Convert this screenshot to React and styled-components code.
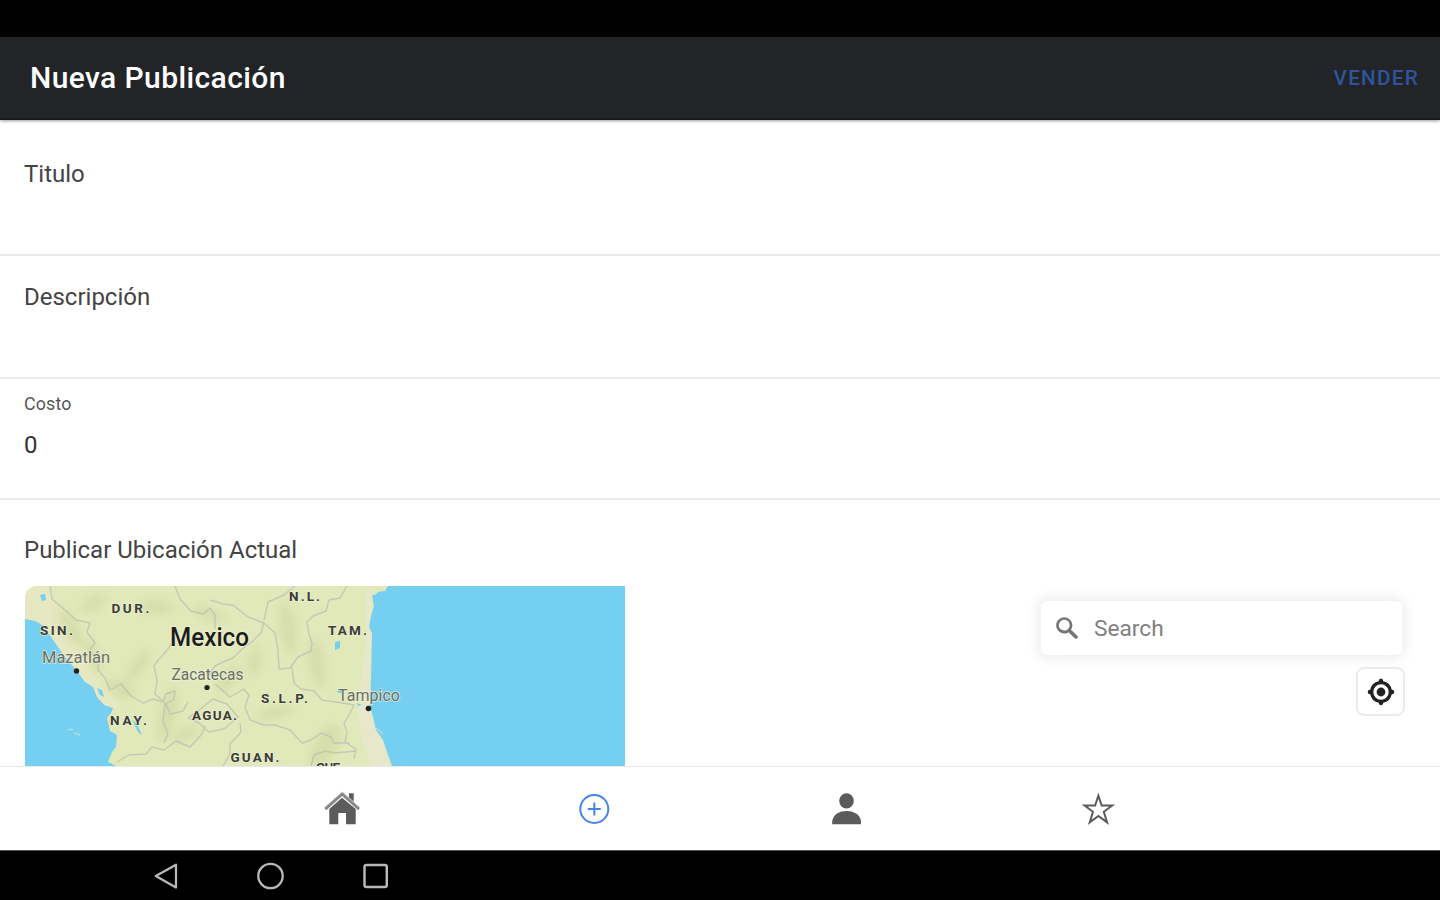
import React from 'react';
import styled, { createGlobalStyle } from 'styled-components';

const GlobalStyle = createGlobalStyle`
  * { box-sizing: border-box; }
  body { margin: 0; background: #000; font-family: Roboto, "Liberation Sans", sans-serif; }
`;

const Screen = styled.div`
  width: 1440px;
  height: 900px;
  display: flex;
  flex-direction: column;
  overflow: hidden;
  background: #fff;
`;

const StatusBar = styled.div`
  flex: 0 0 37px;
  background: #000;
`;

const Header = styled.header`
  flex: 0 0 83px;
  display: flex;
  align-items: center;
  justify-content: space-between;
  padding: 1px 21px 0 30px;
  background: #222428;
  border-bottom: 2px solid #17181b;
  box-shadow: 0 1px 3px rgba(0, 0, 0, 0.4);
  z-index: 1;
`;

const Title = styled.h1`
  margin: 0;
  font-size: 30px;
  line-height: 36px;
  font-weight: 500;
  letter-spacing: 0.4px;
  color: #fff;
`;

const SellButton = styled.button`
  padding: 0;
  border: 0;
  background: none;
  font: 500 20.7px/24px Roboto, sans-serif;
  letter-spacing: 1.25px;
  color: #30549b;
`;

const Content = styled.main`
  flex: 1;
  min-height: 0;
  display: flex;
  flex-direction: column;
  overflow: hidden;
`;

const Field = styled.label`
  flex: 0 0 ${(p) => p.$height}px;
  display: flex;
  flex-direction: column;
  align-items: flex-start;
  padding: ${(p) => p.$top}px 24px 0;
  border-bottom: 2px solid #ebebeb;
`;

const Label = styled.span`
  font-size: ${(p) => (p.$small ? 17.8 : 24)}px;
  line-height: 28px;
  letter-spacing: ${(p) => (p.$small ? 0.2 : 0)}px;
  color: ${(p) => (p.$small ? '#555' : '#444')};
`;

const Value = styled.span`
  margin-top: 13px;
  font-size: 24px;
  line-height: 28px;
  color: #333;
`;

const Location = styled.section`
  flex: 1;
  display: flex;
  flex-direction: column;
  padding: 36px 24px 0;
`;

const MapRow = styled.div`
  display: flex;
  justify-content: space-between;
  margin-top: 22px;
  padding-left: 1px;
`;

const MapCanvas = styled.svg`
  display: block;
  width: 600px;
  height: 180px;
  border-radius: 12px 0 0 0;
`;

const Controls = styled.div`
  display: flex;
  flex-direction: column;
  align-items: flex-end;
  gap: 14px;
  padding: 15px 14px 0 0;
`;

const SearchBox = styled.div`
  display: flex;
  align-items: center;
  gap: 12px;
  width: 361px;
  height: 54px;
  padding-left: 11px;
  border-radius: 6px;
  background: #fff;
  box-shadow: 0 0 13px 3px rgba(0, 0, 0, 0.08);
  color: #808080;
  font-size: 22.7px;
`;

const LocateButton = styled.button`
  display: flex;
  align-items: center;
  justify-content: center;
  width: 45px;
  height: 45px;
  margin-right: -1px;
  padding: 0;
  border: 0;
  border-radius: 6px;
  background: #fff;
  box-shadow: 0 0 0 2px rgba(0, 0, 0, 0.08);
`;

const TabBar = styled.nav`
  flex: 0 0 84px;
  display: flex;
  justify-content: center;
  border-top: 1px solid #e9e9e9;
  background: #fff;
`;

const Tab = styled.div`
  width: 252px;
  display: flex;
  align-items: center;
  justify-content: center;
  color: ${(p) => (p.$active ? '#4584ec' : '#5b5b5b')};
`;

const SystemBar = styled.div`
  flex: 0 0 50px;
  display: flex;
  align-items: center;
  gap: 75px;
  padding-left: 151px;
  border-top: 1px solid #555;
  background: #000;
`;

const stateLines = [
  'M25 0 L27 13 L40 24 L51 34 L65 37 L62 46 L70 57 L64 65 L74 74 L73 84 L80 92 L85 104 L96 98 L106 110 L118 117 L128 113 L138 116 L141 108 L150 105 L149 113 L141 118 L145 128 L158 125 L163 116',
  'M150 0 L155 13 L166 25 L178 28 L185 22 L190 29 L190 43',
  'M150 50 L145 60 L139 68 L134 73 L129 80 L132 94 L130 108 L140 117 L138 135 L143 148 L139 157',
  'M185 14 L198 18 L208 19 L223 31 L239 37 L236 47 L228 55 L217 63 L208 72 L198 76 L190 80 L184 89',
  'M239 34 L243 16 L259 9 L270 0 M239 37 L250 47 L253 64 L254 83 L265 82 L273 71 L286 65 L287 57 L284 48 L282 36 L288 30 L301 25 L304 14 L315 12 L322 0',
  'M267 81 L269 97 L276 103 L289 105 L297 114 L318 117 L329 119 L324 129 L319 137 L322 146 L320 156 L331 163 L329 173',
  'M190 98 L205 111 L219 103 L224 109 L220 121 L225 134 L239 139 L250 139 L265 144 L277 157 L286 154 L296 147 L306 151 L309 157 L325 157',
  'M163 132 L174 124 L188 113 L202 118 L213 131 L199 143 L184 146 L174 137 L163 132',
  'M92 176 L104 169 L121 168 L127 161 L139 164 L151 155 L165 161 L177 148 L180 140',
  'M215 137 L216 146 L205 158 L205 168 L198 180 M286 180 L289 169 L300 165 L310 167 L331 165',
];

const relief = [
  [45, 42, 8, 20, -32], [68, 70, 6, 18, -24], [96, 103, 15, 8, 26],
  [113, 80, 6, 18, 35], [143, 128, 8, 27, 12], [160, 148, 14, 6, -20],
  [185, 28, 17, 5, 20], [230, 75, 7, 14, 8], [263, 42, 8, 27, -8],
  [292, 78, 8, 25, -10], [250, 127, 19, 6, -13], [300, 160, 11, 23, 30],
  [68, 17, 13, 6, -25], [204, 93, 7, 16, 40], [131, 21, 17, 7, 4],
];

const mapLabels = [
  ['DUR.', 86.5, 27, 38, 'state'],
  ['N.L.', 264, 14.5, 31, 'state'],
  ['SIN.', 15, 49, 33, 'state'],
  ['TAM.', 303, 49, 39, 'state'],
  ['NAY.', 85, 139, 37, 'state'],
  ['AGUA.', 167, 133.5, 45, 'state'],
  ['S.L.P.', 236, 116.5, 47, 'state'],
  ['GUAN.', 205.5, 175.5, 49, 'state'],
  ['QUE.', 291, 186, 27, 'state'],
  ['Mazatlán', 17, 77, 68, 'city'],
  ['Zacatecas', 146.5, 94, 72, 'city'],
  ['Tampico', 313, 115, 62, 'city'],
  ['Mexico', 145, 60, 79, 'country'],
];

const labelStyles = {
  state: { fontSize: 13.5, fontWeight: 700, fill: '#3a3c35' },
  city: { fontSize: 16.5, fontWeight: 400, fill: '#6a6e66', lengthAdjust: 'spacingAndGlyphs' },
  country: { fontSize: 25.5, fontWeight: 500, fill: '#1c1d19', lengthAdjust: 'spacingAndGlyphs' },
};

function MexicoMap() {
  return (
    <MapCanvas viewBox="0 0 600 180">
      <defs>
        <filter id="relief" x="-50%" y="-50%" width="200%" height="200%">
          <feGaussianBlur stdDeviation="3.5" />
        </filter>
      </defs>
      <rect width="600" height="180" fill="#e1e8b9" />
      <path d="M0 0H24L33 25 50 55 75 100 94 116 90 125 82 122 52 86 28 56 0 33Z" fill="#e5e8c1" />
      <path d="M347 0 340 10 341 45 338 82 332 120 337 155 346 180H370L344 121 347 47Z" fill="#e7e7ca" />
      <g fill="#c3d098" opacity=".38" filter="url(#relief)">
        {relief.map(([x, y, rx, ry, angle]) => (
          <ellipse key={`${x}-${y}`} cx={x} cy={y} rx={rx} ry={ry} transform={`rotate(${angle} ${x} ${y})`} />
        ))}
      </g>
      <g fill="none" stroke="#bdbfb2" strokeWidth="1.4" strokeLinejoin="round" opacity=".75">
        {stateLines.map((d) => <path key={d} d={d} />)}
      </g>
      <g fill="#75cff0">
        <path d="M0 33 10 35 19 40 28 54 40 71 52 85 60 96 68 101 72 111 79 119 88 122 86 127 82 132 85 145 92 149 91 161 87 166 83 176 91 180H0Z" />
        <path d="M363 0 360 5 353 6 350 9 347 9 349 20 346 30 344 41 347 47 346 94 345 121 348 131 351 144 358 154 362 166 367 180H600V0Z" />
        <path d="M15 9 20 8 21 14 17 15ZM72 102 77 104 79 111 75 109ZM310 56 315 55 315 62 310 64ZM311 106 317 104 319 108ZM107 133 112 138 117 149 113 146ZM332 117 337 119 333 120Z" />
      </g>
      <path d="M43 144 48 143M49 147 55 149M351 142 358 148" stroke="#b7ddd2" strokeWidth="1.5" fill="none" />
      {mapLabels.map(([text, x, y, width, kind]) => (
        <text
          key={text}
          x={x}
          y={y}
          textLength={width}
          fontFamily="Roboto, sans-serif"
          stroke="#f1f3dc"
          strokeWidth="1.6"
          strokeOpacity=".75"
          paintOrder="stroke"
          {...labelStyles[kind]}
        >
          {text}
        </text>
      ))}
      <g fill="#222">
        <circle cx="51.5" cy="85" r="2.7" />
        <circle cx="182" cy="101.5" r="2.6" />
        <circle cx="343.5" cy="122.5" r="2.8" />
      </g>
    </MapCanvas>
  );
}

const SearchIcon = () => (
  <svg width="30" height="30" viewBox="0 0 18 18" fill="#757575">
    <path d="M7.4 2.5c-2.7 0-4.9 2.2-4.9 4.9s2.2 4.9 4.9 4.9c1 0 1.8-.2 2.5-.8l3.7 3.7c.2.2.4.3.8.3.7 0 1.1-.4 1.1-1.1 0-.3-.1-.5-.3-.8L11.4 10c.4-.8.8-1.6.8-2.5.1-2.8-2.1-5-4.8-5zm0 1.6c1.8 0 3.2 1.4 3.2 3.2s-1.4 3.2-3.2 3.2-3.3-1.3-3.3-3.1 1.4-3.3 3.3-3.3z" />
  </svg>
);

const LocateIcon = () => (
  <svg width="44" height="44" viewBox="0 0 20 20" fill="#222">
    <path d="M10 4C9 4 9 5 9 5v.1A5 5 0 0 0 5.1 9H5s-1 0-1 1 1 1 1 1h.1A5 5 0 0 0 9 14.9v.1s0 1 1 1 1-1 1-1v-.1a5 5 0 0 0 3.9-3.9h.1s1 0 1-1-1-1-1-1h-.1A5 5 0 0 0 11 5.1V5s0-1-1-1zm0 2.5a3.5 3.5 0 1 1 0 7 3.5 3.5 0 1 1 0-7z" />
    <circle cx="10" cy="10" r="2" />
  </svg>
);

const HomeIcon = () => (
  <svg width="36" height="36" viewBox="0 0 36 36" fill="currentColor">
    <path d="M25 10V2.3h4.7v12z" />
    <path d="M5.3 18 18 6.8 31.7 18v15.3H22V22h-7.7v11.3H5.3z" />
    <path d="M1.3 18 18.2 3 35 18" fill="none" stroke="#ddd" strokeWidth="4" />
    <path d="M1.3 18 18.2 3 35 18" fill="none" stroke="#858585" strokeWidth="2.6" />
  </svg>
);

const AddIcon = () => (
  <svg width="36" height="36" viewBox="0 0 36 36" fill="none" stroke="currentColor" strokeWidth="2">
    <circle cx="18.3" cy="18" r="14" />
    <path d="M18.3 11.5v13M11.8 18h13" />
  </svg>
);

const PersonIcon = () => (
  <svg width="36" height="36" viewBox="0 0 36 36" fill="currentColor">
    <ellipse cx="18.5" cy="9.8" rx="7.3" ry="7.6" />
    <path d="M4.2 33.3v-3.2C5.4 23.2 11.5 20 18.5 20s13.4 3.2 14.5 10.1v3.2z" />
  </svg>
);

const StarIcon = () => (
  <svg width="36" height="36" viewBox="0 0 36 36" fill="none" stroke="currentColor" strokeWidth="2" strokeLinejoin="miter">
    <path d="M18.4 4.7 21.7 14.6H32.2L23.8 20.8 27.1 31.4 18.4 25 9.7 31.4 13 20.8 4.6 14.6H15.1Z" />
  </svg>
);

const BackGlyph = () => (
  <svg width="30" height="30" viewBox="0 0 30 30" fill="none" stroke="#b8b8b8" strokeWidth="2.3" strokeLinejoin="round">
    <path d="M4.8 15 25 3.8v22.8Z" />
  </svg>
);

const HomeGlyph = () => (
  <svg width="30" height="30" viewBox="0 0 30 30" fill="none" stroke="#b8b8b8" strokeWidth="2.3">
    <circle cx="14.5" cy="15" r="12.2" />
  </svg>
);

const RecentGlyph = () => (
  <svg width="30" height="30" viewBox="0 0 30 30" fill="none" stroke="#b8b8b8" strokeWidth="2.5">
    <rect x="3.5" y="4" width="22.3" height="22" rx="2" />
  </svg>
);

export default function App() {
  return (
    <>
      <GlobalStyle />
      <Screen>
        <StatusBar />
        <Header>
          <Title>Nueva Publicación</Title>
          <SellButton>VENDER</SellButton>
        </Header>
        <Content>
          <Field $height={136} $top={40}>
            <Label>Titulo</Label>
          </Field>
          <Field $height={123} $top={27}>
            <Label>Descripción</Label>
          </Field>
          <Field $height={121} $top={11}>
            <Label $small>Costo</Label>
            <Value>0</Value>
          </Field>
          <Location>
            <Label>Publicar Ubicación Actual</Label>
            <MapRow>
              <MexicoMap />
              <Controls>
                <SearchBox>
                  <SearchIcon />
                  <span>Search</span>
                </SearchBox>
                <LocateButton aria-label="Ubicar">
                  <LocateIcon />
                </LocateButton>
              </Controls>
            </MapRow>
          </Location>
        </Content>
        <TabBar>
          <Tab><HomeIcon /></Tab>
          <Tab $active><AddIcon /></Tab>
          <Tab><PersonIcon /></Tab>
          <Tab><StarIcon /></Tab>
        </TabBar>
        <SystemBar>
          <BackGlyph />
          <HomeGlyph />
          <RecentGlyph />
        </SystemBar>
      </Screen>
    </>
  );
}
